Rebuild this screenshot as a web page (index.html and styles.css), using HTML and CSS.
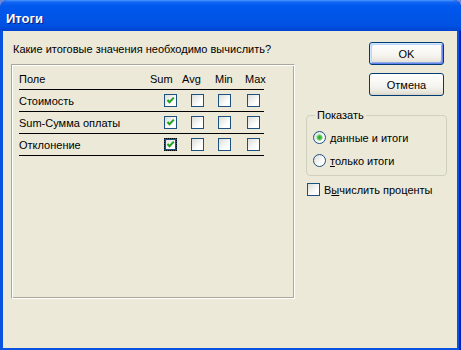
FILE: index.html
```html
<!DOCTYPE html>
<html lang="ru">
<head>
    <meta charset="UTF-8">
    <title>Итоги</title>
    <link rel="stylesheet" href="styles.css">
</head>
<body>
    <div class="window">
        <div class="titlebar">
            <span class="title">Итоги</span>
        </div>
        <div class="client">
            <div class="main">
                <p class="prompt">Какие итоговые значения необходимо вычислить?</p>
                <div class="fields">
                    <div class="row head">
                        <span>Поле</span><span>Sum</span><span>Avg</span><span>Min</span><span>Max</span>
                    </div>
                    <div class="row">
                        <span>Стоимость</span>
                        <span class="cb checked"></span><span class="cb"></span><span class="cb"></span><span class="cb"></span>
                    </div>
                    <div class="row">
                        <span>Sum-Сумма оплаты</span>
                        <span class="cb checked"></span><span class="cb"></span><span class="cb"></span><span class="cb"></span>
                    </div>
                    <div class="row">
                        <span>Отклонение</span>
                        <span class="cb checked focus"></span><span class="cb"></span><span class="cb"></span><span class="cb"></span>
                    </div>
                </div>
            </div>
            <div class="side">
                <button class="btn default">OK</button>
                <button class="btn">Отмена</button>
                <fieldset class="group">
                    <legend>Показать</legend>
                    <div class="opt"><span class="radio on"></span><span><u>д</u>анные и итоги</span></div>
                    <div class="opt"><span class="radio"></span><span><u>т</u>олько итоги</span></div>
                </fieldset>
                <div class="opt percent"><span class="cb"></span><span>В<u>ы</u>числить проценты</span></div>
            </div>
        </div>
    </div>
</body>
</html>
```

FILE: styles.css
```css
html {
    background: #6f86d6;
}

body {
    margin: 0;
    width: 461px;
    height: 350px;
    overflow: hidden;
    font-family: 'Liberation Sans', Arial, sans-serif;
    font-size: 11px;
    color: #000;
}

.window {
    height: 350px;
    display: flex;
    flex-direction: column;
    background: #0a52e0;
    border-radius: 8px 8px 0 0;
    box-shadow: inset -2px 0 0 #0020b8;
}

.titlebar {
    height: 31px;
    flex: none;
    display: flex;
    align-items: center;
    padding-left: 6px;
    border-radius: 8px 8px 0 0;
    background: linear-gradient(to bottom, #4a9bff 0, #1466f2 2px, #0058ee 6px, #0055e8 50%, #0052e4 80%, #0044d0 100%);
}

.title {
    color: #fff;
    font-weight: bold;
    font-size: 13px;
    text-shadow: 1px 1px 0 #0a1a80;
    margin-top: 6px;
}

.client {
    flex: 1;
    display: flex;
    margin: 0 4px 2px 3px;
    background: #ece9d8;
}

.main {
    margin: 12px 0 0 8px;
}

.prompt {
    margin: 0 0 8px 2px;
    line-height: 13px;
}

/* etched list box */
.fields {
    box-sizing: border-box;
    width: 284px;
    height: 235px;
    padding: 3px 0 0 7px;
    border: 1px solid;
    border-color: #aca899 #fff #fff #aca899;
    box-shadow: inset 1px 1px 0 #fff, inset -1px -1px 0 #aca899;
}

.row {
    display: grid;
    grid-template-columns: 145px 27px 27px 29px 13px;
    align-items: center;
    width: 245px;
    height: 21px;
    border-bottom: 1px solid #000;
}

.row.head {
    grid-template-columns: 131px 32px 33px 30px 1fr;
}

.cb {
    box-sizing: border-box;
    display: inline-block;
    width: 13px;
    height: 13px;
    border: 1px solid #1c5180;
    background: linear-gradient(135deg, #dcdcd7 0%, #fff 70%);
}

.cb.checked {
    background: url("data:image/svg+xml,%3Csvg xmlns='http://www.w3.org/2000/svg' width='11' height='11'%3E%3Cpath d='M2.5 5 L4.5 7.2 L8.8 2.6' fill='none' stroke='%2321a121' stroke-width='2'/%3E%3C/svg%3E") center no-repeat, linear-gradient(135deg, #dcdcd7 0%, #fff 70%);
}

.cb.focus {
    outline: 1px dotted #000;
    outline-offset: -1px;
    box-shadow: inset 0 0 0 1px #1c5180;
}

.btn {
    display: block;
    box-sizing: border-box;
    width: 75px;
    height: 23px;
    margin-left: 63px;
    padding: 0;
    border: 1px solid #003c74;
    border-radius: 3px;
    background: linear-gradient(to bottom, #fff 0%, #f5f4ef 60%, #e6e3d8 90%, #d6d0c5 100%);
    font-family: inherit;
    font-size: 11px;
    color: #000;
}

.btn + .btn {
    margin-top: 8px;
}

.btn.default {
    box-shadow: inset 1px 1px 0 #cee7ff, inset -1px -1px 0 #6982ee, inset 2px 2px 0 #bcd4f6, inset -2px -2px 0 #89ade4;
}

.side {
    width: 141px;
    margin: 11px 0 0 11px;
}

.group {
    margin: 13px 0 0;
    padding: 4px 6px 3px;
    border: 1px solid #d0d0bf;
    border-radius: 4px;
    min-inline-size: 0;
}

.group legend {
    padding: 0 2px;
    margin-left: 2px;
    line-height: 13px;
}

.opt {
    display: flex;
    align-items: center;
    gap: 4px;
    height: 23px;
}

.radio {
    box-sizing: border-box;
    width: 13px;
    height: 13px;
    border: 1px solid #1c5180;
    border-radius: 50%;
    background: linear-gradient(135deg, #dcdcd7 0%, #fff 70%);
}

.radio.on {
    background: radial-gradient(circle, #21a121 0, #4cc94c 2px, #a8e0a8 3px, transparent 3.5px), linear-gradient(135deg, #dcdcd7 0%, #fff 70%);
}

.opt.percent {
    height: 13px;
    margin: 7px 0 0 1px;
}
```
